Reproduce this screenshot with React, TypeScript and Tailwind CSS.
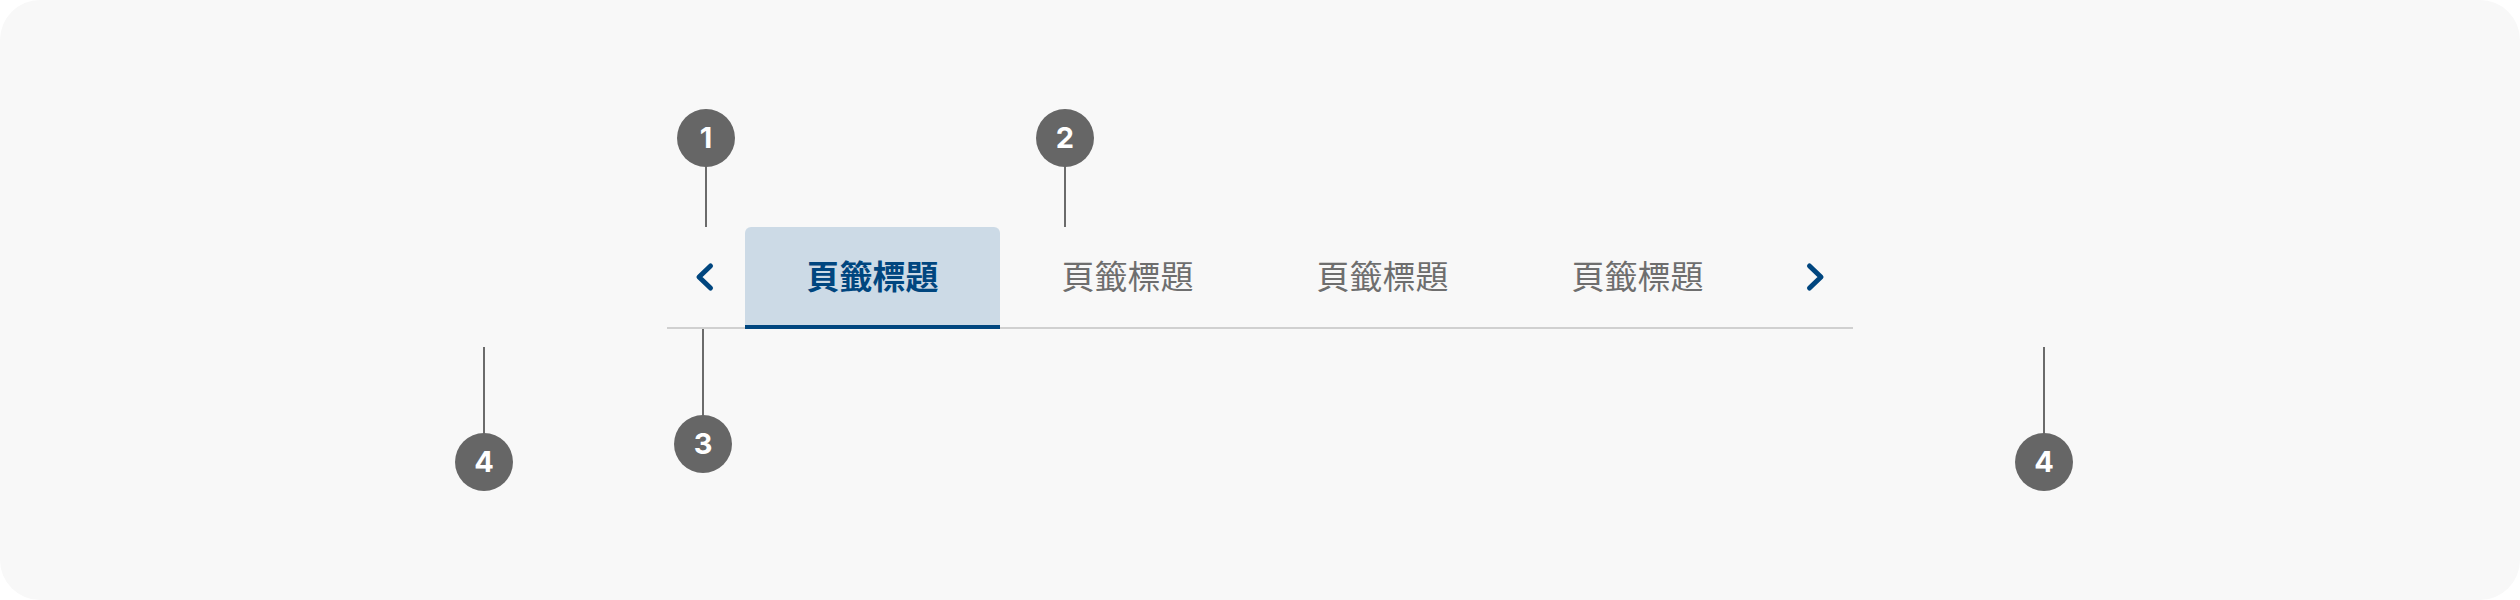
import React from 'react';

const tabs = ['頁籤標題', '頁籤標題', '頁籤標題', '頁籤標題'];

const cjk = { fontFamily: '"Noto Sans CJK TC", "Noto Sans", sans-serif' };

const Chevron: React.FC<{ dir: 'left' | 'right' }> = ({ dir }) => (
  <svg width="20" height="30" viewBox="0 0 20 30" fill="none">
    <polyline
      points={dir === 'left' ? '15.5,4 4,15 15.5,26' : '4.5,4 16,15 4.5,26'}
      stroke="#00467f"
      strokeWidth="5"
      strokeLinecap="round"
      strokeLinejoin="round"
    />
  </svg>
);

// numbered marker with its leader line
const Marker: React.FC<{ n: number; x: number; y: number; lineTop: number; lineBottom: number }> = ({
  n,
  x,
  y,
  lineTop,
  lineBottom,
}) => (
  <>
    <div
      className="absolute w-[2px] bg-[#6b6b6b]"
      style={{ left: x - 1, top: lineTop, height: lineBottom - lineTop }}
    />
    <div
      className="absolute w-[58px] h-[58px] rounded-full bg-[#666666] flex items-center justify-center text-white text-[29px] font-bold"
      style={{ left: x - 29, top: y - 29, fontFamily: 'Inter, "Liberation Sans", sans-serif' }}
    >
      {n}
    </div>
  </>
);

export default function App() {
  return (
    <div className="w-[2520px] h-[600px] bg-white">
      <div className="relative w-full h-full rounded-[40px] bg-[#f8f8f8] flex justify-center pt-[227px]">
        <div className="w-[1186px] h-[102px] flex items-stretch border-b-2 border-[#d0d0d0]">
          <button className="w-[78px] flex items-center justify-start pl-[28px]">
            <Chevron dir="left" />
          </button>
          {tabs.map((t, i) => (
            <div
              key={i}
              className={`w-[255px] flex items-center justify-center text-[33px] -mb-[2px] ${
                i === 0
                  ? 'bg-[#ccdae6] rounded-t-[6px] border-b-4 border-[#00467f] text-[#00467f] font-bold'
                  : 'text-[#6e6e6e] border-b-4 border-transparent'
              }`}
              style={cjk}
            >
              {t}
            </div>
          ))}
          <div className="flex-1" />
          <button className="w-[76px] flex items-center justify-end pr-[28px]">
            <Chevron dir="right" />
          </button>
        </div>

        <Marker n={1} x={706} y={138} lineTop={160} lineBottom={227} />
        <Marker n={2} x={1065} y={138} lineTop={160} lineBottom={227} />
        <Marker n={3} x={703} y={444} lineTop={329} lineBottom={420} />
        <Marker n={4} x={484} y={462} lineTop={347} lineBottom={440} />
        <Marker n={4} x={2044} y={462} lineTop={347} lineBottom={440} />
      </div>
    </div>
  );
}
